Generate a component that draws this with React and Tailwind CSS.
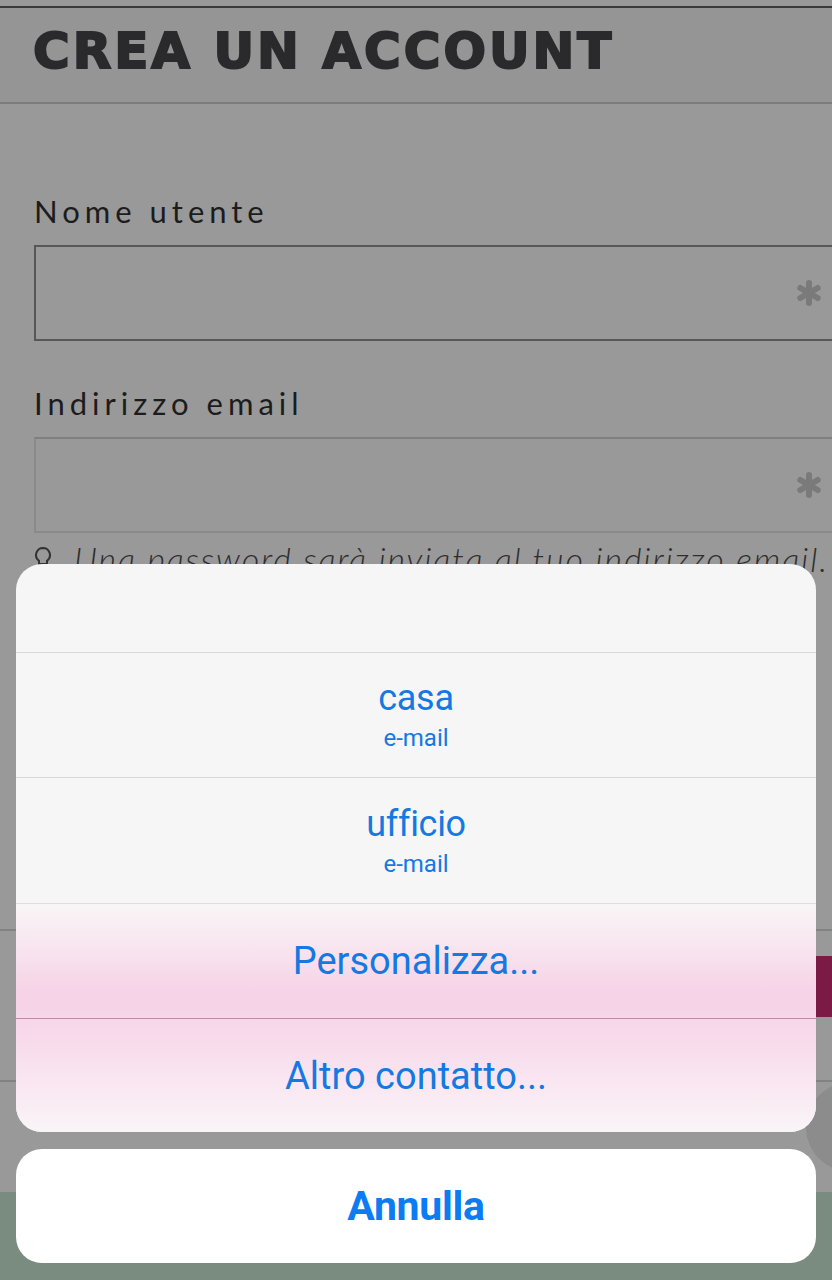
import React from "react";

function Asterisk() {
  return (
    <svg width="26" height="26" viewBox="0 0 26 26" className="shrink-0">
      <g stroke="#7a7a7a" strokeWidth="6" strokeLinecap="round">
        <line x1="13" y1="3" x2="13" y2="23" />
        <line x1="4.3" y1="8" x2="21.7" y2="18" />
        <line x1="4.3" y1="18" x2="21.7" y2="8" />
      </g>
    </svg>
  );
}

function Bulb() {
  return (
    <svg width="18" height="26" viewBox="0 0 18 26" className="shrink-0">
      <path
        d="M9 2a7 7 0 0 0-4 12.7V18h8v-3.3A7 7 0 0 0 9 2z"
        fill="none"
        stroke="#333"
        strokeWidth="2"
      />
      <line x1="6" y1="21" x2="12" y2="21" stroke="#333" strokeWidth="2" />
    </svg>
  );
}

function SheetRow({ title, subtitle, height, border = true }) {
  return (
    <div
      className={`flex flex-col items-center justify-center ${height} ${
        border ? "border-t border-[#d9d9d9]" : ""
      }`}
    >
      <span className="text-[36px] leading-[40px] text-[#1479e2] tracking-[-0.3px]">
        {title}
      </span>
      {subtitle && (
        <span className="mt-[6px] text-[24px] leading-[28px] text-[#1479e2]">
          {subtitle}
        </span>
      )}
    </div>
  );
}

export default function App() {
  return (
    <div className="relative w-[832px] h-[1280px] overflow-hidden bg-[#999999] font-['Lato','Liberation_Sans',sans-serif]">
      {/* page behind the sheet, dimmed */}
      <div className="h-[6px]" />
      <div className="h-[2px] bg-[#3a3a3a]" />
      <div className="flex items-center h-[96px] pl-[33px] border-b-2 border-[#7c7c7c] bg-[#959595]">
        <h1 className="text-[50px] leading-none font-bold tracking-[3px] text-[#2a2a2c] -mt-[8px] font-['DejaVu_Sans',sans-serif] [-webkit-text-stroke:2px_#2a2a2c]">
          CREA UN ACCOUNT
        </h1>
      </div>

      <div className="pl-[34px]">
        <div className="mt-[90px] text-[31px] leading-[34px] tracking-[5px] text-[#1c1c1c]">
          Nome utente
        </div>
        <div className="mt-[17px] flex items-center justify-end w-[820px] h-[96px] border-2 border-[#575757] pr-[30px]">
          <Asterisk />
        </div>

        <div className="mt-[45px] text-[31px] leading-[34px] tracking-[5px] text-[#1c1c1c]">
          Indirizzo email
        </div>
        <div className="mt-[17px] flex items-center justify-end w-[820px] h-[96px] border-2 border-[#8a8a8a] border-t-[#7f7f7f] pr-[30px]">
          <Asterisk />
        </div>

        <div className="mt-[8px] flex items-center gap-[22px] h-[36px]">
          <Bulb />
          <span className="italic font-light text-[34px] leading-none tracking-[1.9px] text-[#2e2e2e] whitespace-nowrap">
            Una password sarà inviata al tuo indirizzo email.
          </span>
        </div>
      </div>

      <div className="mt-[352px] h-[2px] bg-[#828282]" />
      <div className="mt-[25px] flex justify-end">
        <div className="w-[60px] h-[61px] bg-[#7a1a45]" />
      </div>
      <div className="mt-[63px] h-[2px] bg-[#828282]" />
      <div className="mt-[110px] h-[100px] bg-[#7a8c80]" />

      {/* floating round button peeking at the right edge */}
      <div className="absolute left-[806px] top-[1082px] w-[90px] h-[90px] rounded-full bg-[#8c8c8c]" />

      {/* action sheet */}
      <div className="absolute left-[16px] top-[564px] w-[800px] rounded-[26px] overflow-hidden bg-[#f6f6f6] font-['Roboto','Liberation_Sans',sans-serif]">
        <div className="h-[88px]" />
        <SheetRow title="casa" subtitle="e-mail" height="h-[125px]" />
        <SheetRow title="ufficio" subtitle="e-mail" height="h-[126px]" />
        <div className="bg-[linear-gradient(to_bottom,#f8f6f7_0%,#f8e6f0_18%,#f6d2e6_40%,#f7d8ea_55%,#f9e6f1_78%,#f9f5f7_100%)]">
          <div className="flex items-center justify-center h-[115px] border-t border-[#e6dbe1]">
            <span className="text-[38px] leading-[40px] text-[#1479e2] tracking-[0px]">
              Personalizza...
            </span>
          </div>
          <div className="flex items-center justify-center h-[114px] border-t border-[#c08aa8]">
            <span className="text-[38px] leading-[40px] text-[#1479e2] tracking-[0px]">
              Altro contatto...
            </span>
          </div>
        </div>
      </div>

      <div className="absolute left-[16px] top-[1149px] w-[800px] h-[114px] rounded-[26px] bg-white flex items-center justify-center font-['Roboto','Liberation_Sans',sans-serif]">
        <span className="text-[41px] leading-none font-bold text-[#0b7cf2] tracking-[-0.3px]">
          Annulla
        </span>
      </div>
    </div>
  );
}
